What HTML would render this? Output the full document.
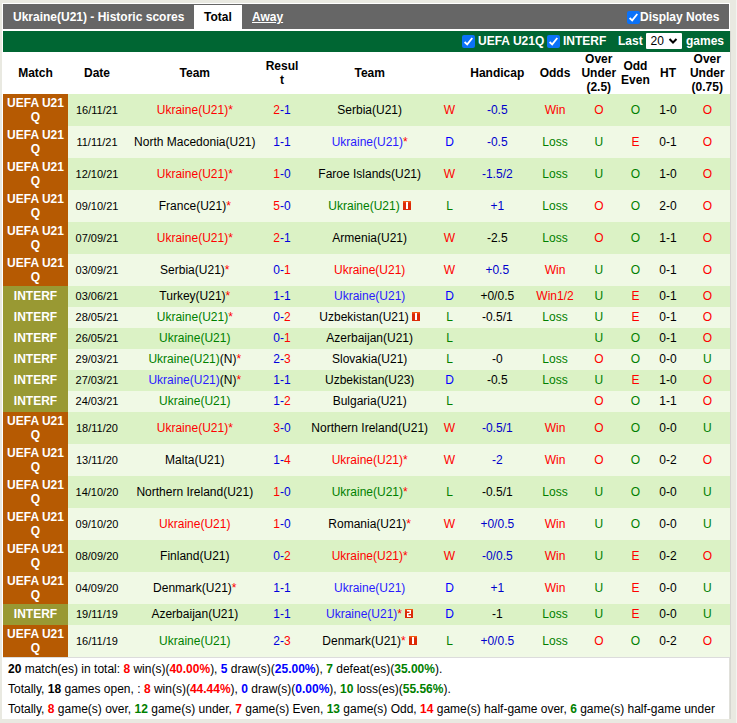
<!DOCTYPE html>
<html><head><meta charset="utf-8">
<style>
*{box-sizing:border-box}
html,body{margin:0;padding:0}
body{width:737px;height:723px;position:relative;overflow:hidden;background:#e9e9e1;font-family:"Liberation Sans",sans-serif;font-size:12px;color:#000}
.abs{position:absolute}
.row{position:absolute;left:68px;width:662px}
.lg{position:absolute;left:3px;width:65px;color:#fff;font-weight:bold;font-size:12px;text-align:center}
.c{position:absolute;text-align:center;white-space:nowrap}
.hc{position:absolute;top:52px;height:42px;display:flex;align-items:center;justify-content:center;text-align:center;font-weight:bold;line-height:14px;white-space:nowrap}
.rc{vertical-align:baseline}
.sum{position:absolute;left:8px;white-space:nowrap}
.cb{position:absolute;width:13px;height:13px;background:#0b72f8;border-radius:2px}
.cb svg{position:absolute;left:0;top:0}
</style></head><body>
<div class="abs" style="left:2px;top:3px;width:728px;height:716px;background:#fff"></div>
<div class="abs" style="left:730px;top:31px;width:1px;height:688px;background:#d6d6d0"></div>
<div class="abs" style="left:736px;top:0;width:1px;height:723px;background:#f4f4f0"></div>
<div class="abs" style="left:729px;top:658px;width:1px;height:61px;background:#e0e0da"></div>
<div class="abs" style="left:3px;top:4px;width:726px;height:25px;background:#666"></div>
<div class="abs" style="left:194px;top:5px;width:48px;height:26px;background:#fff"></div>
<div class="abs" style="left:13px;top:10px;color:#fff;font-weight:bold;line-height:14px">Ukraine(U21) - Historic scores</div>
<div class="abs" style="left:204px;top:10px;color:#000;font-weight:bold;line-height:14px">Total</div>
<div class="abs" style="left:252px;top:10px;color:#fff;font-weight:bold;line-height:14px;text-decoration:underline">Away</div>
<div class="cb" style="left:627px;top:11px"><svg width="13" height="13" viewBox="0 0 13 13"><path d="M2.6 7 L5.2 9.4 L10.3 3" stroke="#fff" stroke-width="1.8" fill="none"/></svg></div>
<div class="abs" style="left:640px;top:10px;color:#fff;font-weight:bold;line-height:14px">Display Notes</div>
<div class="abs" style="left:3px;top:31px;width:727px;height:21px;background:#006633"></div>
<div class="cb" style="left:462px;top:35px"><svg width="13" height="13" viewBox="0 0 13 13"><path d="M2.6 7 L5.2 9.4 L10.3 3" stroke="#fff" stroke-width="1.8" fill="none"/></svg></div>
<div class="abs" style="left:478px;top:34px;color:#fff;font-weight:bold;line-height:14px">UEFA U21Q</div>
<div class="cb" style="left:547px;top:35px"><svg width="13" height="13" viewBox="0 0 13 13"><path d="M2.6 7 L5.2 9.4 L10.3 3" stroke="#fff" stroke-width="1.8" fill="none"/></svg></div>
<div class="abs" style="left:563px;top:34px;color:#fff;font-weight:bold;line-height:14px">INTERF</div>
<div class="abs" style="left:618px;top:34px;color:#fff;font-weight:bold;line-height:14px">Last</div>
<div class="abs" style="left:646px;top:33px;width:36px;height:16px;background:#fff;border-radius:1px"></div>
<div class="abs" style="left:650.5px;top:34px;color:#000;font-size:12px;line-height:14px">20</div>
<svg class="abs" style="left:668px;top:37px" width="10" height="8" viewBox="0 0 10 8"><path d="M1.5 2 L5 5.5 L8.5 2" stroke="#000" stroke-width="2" fill="none"/></svg>
<div class="abs" style="left:686px;top:34px;color:#fff;font-weight:bold;line-height:14px">games</div>
<div class="hc" style="left:-64.5px;width:200px">Match</div>
<div class="hc" style="left:-3.0px;width:200px">Date</div>
<div class="hc" style="left:94.8px;width:200px">Team</div>
<div class="hc" style="left:182.0px;width:200px">Resul<br>t</div>
<div class="hc" style="left:269.7px;width:200px">Team</div>
<div class="hc" style="left:397.3px;width:200px">Handicap</div>
<div class="hc" style="left:455.0px;width:200px">Odds</div>
<div class="hc" style="left:498.8px;width:200px">Over<br>Under<br>(2.5)</div>
<div class="hc" style="left:535.4px;width:200px">Odd<br>Even</div>
<div class="hc" style="left:568.0px;width:200px">HT</div>
<div class="hc" style="left:607.3px;width:200px">Over<br>Under<br>(0.75)</div>
<div class="row" style="top:94px;height:32px;background:#dbf2c5"></div>
<div class="lg" style="top:94px;height:32px;background:#b65a02"><div style="padding-top:2px;line-height:14px">UEFA U21<br>Q</div></div>
<div class="c" style="left:-23.0px;top:94px;width:240px;height:32px;line-height:32px;font-size:11px">16/11/21</div>
<div class="c" style="left:74.8px;top:94px;width:240px;height:32px;line-height:32px;"><span style="color:#ff0000">Ukraine(U21)</span><span style="color:#ff0000">*</span></div>
<div class="c" style="left:162.0px;top:94px;width:240px;height:32px;line-height:32px;"><span style="color:#ff0000">2</span><span style="color:#0000dd">-1</span></div>
<div class="c" style="left:249.7px;top:94px;width:240px;height:32px;line-height:32px;">Serbia(U21)</div>
<div class="c" style="left:329.5px;top:94px;width:240px;height:32px;line-height:32px;"><span style="color:#ff0000">W</span></div>
<div class="c" style="left:377.3px;top:94px;width:240px;height:32px;line-height:32px;"><span style="color:#0000cc">-0.5</span></div>
<div class="c" style="left:435.0px;top:94px;width:240px;height:32px;line-height:32px;"><span style="color:#ff0000">Win</span></div>
<div class="c" style="left:478.8px;top:94px;width:240px;height:32px;line-height:32px;"><span style="color:#ff0000">O</span></div>
<div class="c" style="left:515.4px;top:94px;width:240px;height:32px;line-height:32px;"><span style="color:#008000">O</span></div>
<div class="c" style="left:548.0px;top:94px;width:240px;height:32px;line-height:32px;">1-0</div>
<div class="c" style="left:587.3px;top:94px;width:240px;height:32px;line-height:32px;"><span style="color:#ff0000">O</span></div>
<div class="row" style="top:126px;height:32px;background:#f0f9e5"></div>
<div class="lg" style="top:126px;height:32px;background:#b65a02"><div style="padding-top:2px;line-height:14px">UEFA U21<br>Q</div></div>
<div class="c" style="left:-23.0px;top:126px;width:240px;height:32px;line-height:32px;font-size:11px">11/11/21</div>
<div class="c" style="left:74.8px;top:126px;width:240px;height:32px;line-height:32px;">North Macedonia(U21)</div>
<div class="c" style="left:162.0px;top:126px;width:240px;height:32px;line-height:32px;"><span style="color:#0000dd">1-1</span></div>
<div class="c" style="left:249.7px;top:126px;width:240px;height:32px;line-height:32px;"><span style="color:#2a1aff">Ukraine(U21)</span><span style="color:#ff0000">*</span></div>
<div class="c" style="left:329.5px;top:126px;width:240px;height:32px;line-height:32px;"><span style="color:#0000ff">D</span></div>
<div class="c" style="left:377.3px;top:126px;width:240px;height:32px;line-height:32px;"><span style="color:#0000cc">-0.5</span></div>
<div class="c" style="left:435.0px;top:126px;width:240px;height:32px;line-height:32px;"><span style="color:#008000">Loss</span></div>
<div class="c" style="left:478.8px;top:126px;width:240px;height:32px;line-height:32px;"><span style="color:#008000">U</span></div>
<div class="c" style="left:515.4px;top:126px;width:240px;height:32px;line-height:32px;"><span style="color:#ff0000">E</span></div>
<div class="c" style="left:548.0px;top:126px;width:240px;height:32px;line-height:32px;">0-1</div>
<div class="c" style="left:587.3px;top:126px;width:240px;height:32px;line-height:32px;"><span style="color:#ff0000">O</span></div>
<div class="row" style="top:158px;height:32px;background:#dbf2c5"></div>
<div class="lg" style="top:158px;height:32px;background:#b65a02"><div style="padding-top:2px;line-height:14px">UEFA U21<br>Q</div></div>
<div class="c" style="left:-23.0px;top:158px;width:240px;height:32px;line-height:32px;font-size:11px">12/10/21</div>
<div class="c" style="left:74.8px;top:158px;width:240px;height:32px;line-height:32px;"><span style="color:#ff0000">Ukraine(U21)</span><span style="color:#ff0000">*</span></div>
<div class="c" style="left:162.0px;top:158px;width:240px;height:32px;line-height:32px;"><span style="color:#ff0000">1</span><span style="color:#0000dd">-0</span></div>
<div class="c" style="left:249.7px;top:158px;width:240px;height:32px;line-height:32px;">Faroe Islands(U21)</div>
<div class="c" style="left:329.5px;top:158px;width:240px;height:32px;line-height:32px;"><span style="color:#ff0000">W</span></div>
<div class="c" style="left:377.3px;top:158px;width:240px;height:32px;line-height:32px;"><span style="color:#0000cc">-1.5/2</span></div>
<div class="c" style="left:435.0px;top:158px;width:240px;height:32px;line-height:32px;"><span style="color:#008000">Loss</span></div>
<div class="c" style="left:478.8px;top:158px;width:240px;height:32px;line-height:32px;"><span style="color:#008000">U</span></div>
<div class="c" style="left:515.4px;top:158px;width:240px;height:32px;line-height:32px;"><span style="color:#008000">O</span></div>
<div class="c" style="left:548.0px;top:158px;width:240px;height:32px;line-height:32px;">1-0</div>
<div class="c" style="left:587.3px;top:158px;width:240px;height:32px;line-height:32px;"><span style="color:#ff0000">O</span></div>
<div class="row" style="top:190px;height:32px;background:#f0f9e5"></div>
<div class="lg" style="top:190px;height:32px;background:#b65a02"><div style="padding-top:2px;line-height:14px">UEFA U21<br>Q</div></div>
<div class="c" style="left:-23.0px;top:190px;width:240px;height:32px;line-height:32px;font-size:11px">09/10/21</div>
<div class="c" style="left:74.8px;top:190px;width:240px;height:32px;line-height:32px;">France(U21)<span style="color:#ff0000">*</span></div>
<div class="c" style="left:162.0px;top:190px;width:240px;height:32px;line-height:32px;"><span style="color:#ff0000">5</span><span style="color:#0000dd">-0</span></div>
<div class="c" style="left:249.7px;top:190px;width:240px;height:32px;line-height:32px;"><span style="color:#008000">Ukraine(U21)</span> <svg class="rc" width="8" height="9" viewBox="0 0 8 9"><rect width="8" height="9" fill="#dc2a08"/><rect width="8" height="1.5" fill="#f25a14"/><rect x="3" y="1" width="2" height="7" fill="#fff"/></svg></div>
<div class="c" style="left:329.5px;top:190px;width:240px;height:32px;line-height:32px;"><span style="color:#008000">L</span></div>
<div class="c" style="left:377.3px;top:190px;width:240px;height:32px;line-height:32px;"><span style="color:#0000cc">+1</span></div>
<div class="c" style="left:435.0px;top:190px;width:240px;height:32px;line-height:32px;"><span style="color:#008000">Loss</span></div>
<div class="c" style="left:478.8px;top:190px;width:240px;height:32px;line-height:32px;"><span style="color:#ff0000">O</span></div>
<div class="c" style="left:515.4px;top:190px;width:240px;height:32px;line-height:32px;"><span style="color:#008000">O</span></div>
<div class="c" style="left:548.0px;top:190px;width:240px;height:32px;line-height:32px;">2-0</div>
<div class="c" style="left:587.3px;top:190px;width:240px;height:32px;line-height:32px;"><span style="color:#ff0000">O</span></div>
<div class="row" style="top:222px;height:32px;background:#dbf2c5"></div>
<div class="lg" style="top:222px;height:32px;background:#b65a02"><div style="padding-top:2px;line-height:14px">UEFA U21<br>Q</div></div>
<div class="c" style="left:-23.0px;top:222px;width:240px;height:32px;line-height:32px;font-size:11px">07/09/21</div>
<div class="c" style="left:74.8px;top:222px;width:240px;height:32px;line-height:32px;"><span style="color:#ff0000">Ukraine(U21)</span><span style="color:#ff0000">*</span></div>
<div class="c" style="left:162.0px;top:222px;width:240px;height:32px;line-height:32px;"><span style="color:#ff0000">2</span><span style="color:#0000dd">-1</span></div>
<div class="c" style="left:249.7px;top:222px;width:240px;height:32px;line-height:32px;">Armenia(U21)</div>
<div class="c" style="left:329.5px;top:222px;width:240px;height:32px;line-height:32px;"><span style="color:#ff0000">W</span></div>
<div class="c" style="left:377.3px;top:222px;width:240px;height:32px;line-height:32px;"><span style="color:#000000">-2.5</span></div>
<div class="c" style="left:435.0px;top:222px;width:240px;height:32px;line-height:32px;"><span style="color:#008000">Loss</span></div>
<div class="c" style="left:478.8px;top:222px;width:240px;height:32px;line-height:32px;"><span style="color:#ff0000">O</span></div>
<div class="c" style="left:515.4px;top:222px;width:240px;height:32px;line-height:32px;"><span style="color:#008000">O</span></div>
<div class="c" style="left:548.0px;top:222px;width:240px;height:32px;line-height:32px;">1-1</div>
<div class="c" style="left:587.3px;top:222px;width:240px;height:32px;line-height:32px;"><span style="color:#ff0000">O</span></div>
<div class="row" style="top:254px;height:32px;background:#f0f9e5"></div>
<div class="lg" style="top:254px;height:32px;background:#b65a02"><div style="padding-top:2px;line-height:14px">UEFA U21<br>Q</div></div>
<div class="c" style="left:-23.0px;top:254px;width:240px;height:32px;line-height:32px;font-size:11px">03/09/21</div>
<div class="c" style="left:74.8px;top:254px;width:240px;height:32px;line-height:32px;">Serbia(U21)<span style="color:#ff0000">*</span></div>
<div class="c" style="left:162.0px;top:254px;width:240px;height:32px;line-height:32px;"><span style="color:#0000dd">0-</span><span style="color:#ff0000">1</span></div>
<div class="c" style="left:249.7px;top:254px;width:240px;height:32px;line-height:32px;"><span style="color:#ff0000">Ukraine(U21)</span></div>
<div class="c" style="left:329.5px;top:254px;width:240px;height:32px;line-height:32px;"><span style="color:#ff0000">W</span></div>
<div class="c" style="left:377.3px;top:254px;width:240px;height:32px;line-height:32px;"><span style="color:#0000cc">+0.5</span></div>
<div class="c" style="left:435.0px;top:254px;width:240px;height:32px;line-height:32px;"><span style="color:#ff0000">Win</span></div>
<div class="c" style="left:478.8px;top:254px;width:240px;height:32px;line-height:32px;"><span style="color:#008000">U</span></div>
<div class="c" style="left:515.4px;top:254px;width:240px;height:32px;line-height:32px;"><span style="color:#008000">O</span></div>
<div class="c" style="left:548.0px;top:254px;width:240px;height:32px;line-height:32px;">0-1</div>
<div class="c" style="left:587.3px;top:254px;width:240px;height:32px;line-height:32px;"><span style="color:#ff0000">O</span></div>
<div class="row" style="top:286px;height:21px;background:#dbf2c5"></div>
<div class="lg" style="top:286px;height:21px;line-height:21px;background:#999933">INTERF</div>
<div class="c" style="left:-23.0px;top:286px;width:240px;height:21px;line-height:21px;font-size:11px">03/06/21</div>
<div class="c" style="left:74.8px;top:286px;width:240px;height:21px;line-height:21px;">Turkey(U21)<span style="color:#ff0000">*</span></div>
<div class="c" style="left:162.0px;top:286px;width:240px;height:21px;line-height:21px;"><span style="color:#0000dd">1-1</span></div>
<div class="c" style="left:249.7px;top:286px;width:240px;height:21px;line-height:21px;"><span style="color:#2a1aff">Ukraine(U21)</span></div>
<div class="c" style="left:329.5px;top:286px;width:240px;height:21px;line-height:21px;"><span style="color:#0000ff">D</span></div>
<div class="c" style="left:377.3px;top:286px;width:240px;height:21px;line-height:21px;"><span style="color:#000000">+0/0.5</span></div>
<div class="c" style="left:435.0px;top:286px;width:240px;height:21px;line-height:21px;"><span style="color:#ff0000">Win1/2</span></div>
<div class="c" style="left:478.8px;top:286px;width:240px;height:21px;line-height:21px;"><span style="color:#008000">U</span></div>
<div class="c" style="left:515.4px;top:286px;width:240px;height:21px;line-height:21px;"><span style="color:#ff0000">E</span></div>
<div class="c" style="left:548.0px;top:286px;width:240px;height:21px;line-height:21px;">0-1</div>
<div class="c" style="left:587.3px;top:286px;width:240px;height:21px;line-height:21px;"><span style="color:#ff0000">O</span></div>
<div class="row" style="top:307px;height:21px;background:#f0f9e5"></div>
<div class="lg" style="top:307px;height:21px;line-height:21px;background:#999933">INTERF</div>
<div class="c" style="left:-23.0px;top:307px;width:240px;height:21px;line-height:21px;font-size:11px">28/05/21</div>
<div class="c" style="left:74.8px;top:307px;width:240px;height:21px;line-height:21px;"><span style="color:#008000">Ukraine(U21)</span><span style="color:#ff0000">*</span></div>
<div class="c" style="left:162.0px;top:307px;width:240px;height:21px;line-height:21px;"><span style="color:#0000dd">0-</span><span style="color:#ff0000">2</span></div>
<div class="c" style="left:249.7px;top:307px;width:240px;height:21px;line-height:21px;">Uzbekistan(U21) <svg class="rc" width="8" height="9" viewBox="0 0 8 9"><rect width="8" height="9" fill="#dc2a08"/><rect width="8" height="1.5" fill="#f25a14"/><rect x="3" y="1" width="2" height="7" fill="#fff"/></svg></div>
<div class="c" style="left:329.5px;top:307px;width:240px;height:21px;line-height:21px;"><span style="color:#008000">L</span></div>
<div class="c" style="left:377.3px;top:307px;width:240px;height:21px;line-height:21px;"><span style="color:#000000">-0.5/1</span></div>
<div class="c" style="left:435.0px;top:307px;width:240px;height:21px;line-height:21px;"><span style="color:#008000">Loss</span></div>
<div class="c" style="left:478.8px;top:307px;width:240px;height:21px;line-height:21px;"><span style="color:#008000">U</span></div>
<div class="c" style="left:515.4px;top:307px;width:240px;height:21px;line-height:21px;"><span style="color:#ff0000">E</span></div>
<div class="c" style="left:548.0px;top:307px;width:240px;height:21px;line-height:21px;">0-1</div>
<div class="c" style="left:587.3px;top:307px;width:240px;height:21px;line-height:21px;"><span style="color:#ff0000">O</span></div>
<div class="row" style="top:328px;height:21px;background:#dbf2c5"></div>
<div class="lg" style="top:328px;height:21px;line-height:21px;background:#999933">INTERF</div>
<div class="c" style="left:-23.0px;top:328px;width:240px;height:21px;line-height:21px;font-size:11px">26/05/21</div>
<div class="c" style="left:74.8px;top:328px;width:240px;height:21px;line-height:21px;"><span style="color:#008000">Ukraine(U21)</span></div>
<div class="c" style="left:162.0px;top:328px;width:240px;height:21px;line-height:21px;"><span style="color:#0000dd">0-</span><span style="color:#ff0000">1</span></div>
<div class="c" style="left:249.7px;top:328px;width:240px;height:21px;line-height:21px;">Azerbaijan(U21)</div>
<div class="c" style="left:329.5px;top:328px;width:240px;height:21px;line-height:21px;"><span style="color:#008000">L</span></div>
<div class="c" style="left:377.3px;top:328px;width:240px;height:21px;line-height:21px;"><span style="color:#000000"></span></div>
<div class="c" style="left:435.0px;top:328px;width:240px;height:21px;line-height:21px;"><span style="color:#000000"></span></div>
<div class="c" style="left:478.8px;top:328px;width:240px;height:21px;line-height:21px;"><span style="color:#008000">U</span></div>
<div class="c" style="left:515.4px;top:328px;width:240px;height:21px;line-height:21px;"><span style="color:#008000">O</span></div>
<div class="c" style="left:548.0px;top:328px;width:240px;height:21px;line-height:21px;">0-1</div>
<div class="c" style="left:587.3px;top:328px;width:240px;height:21px;line-height:21px;"><span style="color:#ff0000">O</span></div>
<div class="row" style="top:349px;height:21px;background:#f0f9e5"></div>
<div class="lg" style="top:349px;height:21px;line-height:21px;background:#999933">INTERF</div>
<div class="c" style="left:-23.0px;top:349px;width:240px;height:21px;line-height:21px;font-size:11px">29/03/21</div>
<div class="c" style="left:74.8px;top:349px;width:240px;height:21px;line-height:21px;"><span style="color:#008000">Ukraine(U21)</span>(N)<span style="color:#ff0000">*</span></div>
<div class="c" style="left:162.0px;top:349px;width:240px;height:21px;line-height:21px;"><span style="color:#0000dd">2-</span><span style="color:#ff0000">3</span></div>
<div class="c" style="left:249.7px;top:349px;width:240px;height:21px;line-height:21px;">Slovakia(U21)</div>
<div class="c" style="left:329.5px;top:349px;width:240px;height:21px;line-height:21px;"><span style="color:#008000">L</span></div>
<div class="c" style="left:377.3px;top:349px;width:240px;height:21px;line-height:21px;"><span style="color:#000000">-0</span></div>
<div class="c" style="left:435.0px;top:349px;width:240px;height:21px;line-height:21px;"><span style="color:#008000">Loss</span></div>
<div class="c" style="left:478.8px;top:349px;width:240px;height:21px;line-height:21px;"><span style="color:#ff0000">O</span></div>
<div class="c" style="left:515.4px;top:349px;width:240px;height:21px;line-height:21px;"><span style="color:#008000">O</span></div>
<div class="c" style="left:548.0px;top:349px;width:240px;height:21px;line-height:21px;">0-0</div>
<div class="c" style="left:587.3px;top:349px;width:240px;height:21px;line-height:21px;"><span style="color:#008000">U</span></div>
<div class="row" style="top:370px;height:21px;background:#dbf2c5"></div>
<div class="lg" style="top:370px;height:21px;line-height:21px;background:#999933">INTERF</div>
<div class="c" style="left:-23.0px;top:370px;width:240px;height:21px;line-height:21px;font-size:11px">27/03/21</div>
<div class="c" style="left:74.8px;top:370px;width:240px;height:21px;line-height:21px;"><span style="color:#2a1aff">Ukraine(U21)</span>(N)<span style="color:#ff0000">*</span></div>
<div class="c" style="left:162.0px;top:370px;width:240px;height:21px;line-height:21px;"><span style="color:#0000dd">1-1</span></div>
<div class="c" style="left:249.7px;top:370px;width:240px;height:21px;line-height:21px;">Uzbekistan(U23)</div>
<div class="c" style="left:329.5px;top:370px;width:240px;height:21px;line-height:21px;"><span style="color:#0000ff">D</span></div>
<div class="c" style="left:377.3px;top:370px;width:240px;height:21px;line-height:21px;"><span style="color:#000000">-0.5</span></div>
<div class="c" style="left:435.0px;top:370px;width:240px;height:21px;line-height:21px;"><span style="color:#008000">Loss</span></div>
<div class="c" style="left:478.8px;top:370px;width:240px;height:21px;line-height:21px;"><span style="color:#008000">U</span></div>
<div class="c" style="left:515.4px;top:370px;width:240px;height:21px;line-height:21px;"><span style="color:#ff0000">E</span></div>
<div class="c" style="left:548.0px;top:370px;width:240px;height:21px;line-height:21px;">1-0</div>
<div class="c" style="left:587.3px;top:370px;width:240px;height:21px;line-height:21px;"><span style="color:#ff0000">O</span></div>
<div class="row" style="top:391px;height:21px;background:#f0f9e5"></div>
<div class="lg" style="top:391px;height:21px;line-height:21px;background:#999933">INTERF</div>
<div class="c" style="left:-23.0px;top:391px;width:240px;height:21px;line-height:21px;font-size:11px">24/03/21</div>
<div class="c" style="left:74.8px;top:391px;width:240px;height:21px;line-height:21px;"><span style="color:#008000">Ukraine(U21)</span></div>
<div class="c" style="left:162.0px;top:391px;width:240px;height:21px;line-height:21px;"><span style="color:#0000dd">1-</span><span style="color:#ff0000">2</span></div>
<div class="c" style="left:249.7px;top:391px;width:240px;height:21px;line-height:21px;">Bulgaria(U21)</div>
<div class="c" style="left:329.5px;top:391px;width:240px;height:21px;line-height:21px;"><span style="color:#008000">L</span></div>
<div class="c" style="left:377.3px;top:391px;width:240px;height:21px;line-height:21px;"><span style="color:#000000"></span></div>
<div class="c" style="left:435.0px;top:391px;width:240px;height:21px;line-height:21px;"><span style="color:#000000"></span></div>
<div class="c" style="left:478.8px;top:391px;width:240px;height:21px;line-height:21px;"><span style="color:#ff0000">O</span></div>
<div class="c" style="left:515.4px;top:391px;width:240px;height:21px;line-height:21px;"><span style="color:#008000">O</span></div>
<div class="c" style="left:548.0px;top:391px;width:240px;height:21px;line-height:21px;">1-1</div>
<div class="c" style="left:587.3px;top:391px;width:240px;height:21px;line-height:21px;"><span style="color:#ff0000">O</span></div>
<div class="row" style="top:412px;height:32px;background:#dbf2c5"></div>
<div class="lg" style="top:412px;height:32px;background:#b65a02"><div style="padding-top:2px;line-height:14px">UEFA U21<br>Q</div></div>
<div class="c" style="left:-23.0px;top:412px;width:240px;height:32px;line-height:32px;font-size:11px">18/11/20</div>
<div class="c" style="left:74.8px;top:412px;width:240px;height:32px;line-height:32px;"><span style="color:#ff0000">Ukraine(U21)</span><span style="color:#ff0000">*</span></div>
<div class="c" style="left:162.0px;top:412px;width:240px;height:32px;line-height:32px;"><span style="color:#ff0000">3</span><span style="color:#0000dd">-0</span></div>
<div class="c" style="left:249.7px;top:412px;width:240px;height:32px;line-height:32px;">Northern Ireland(U21)</div>
<div class="c" style="left:329.5px;top:412px;width:240px;height:32px;line-height:32px;"><span style="color:#ff0000">W</span></div>
<div class="c" style="left:377.3px;top:412px;width:240px;height:32px;line-height:32px;"><span style="color:#0000cc">-0.5/1</span></div>
<div class="c" style="left:435.0px;top:412px;width:240px;height:32px;line-height:32px;"><span style="color:#ff0000">Win</span></div>
<div class="c" style="left:478.8px;top:412px;width:240px;height:32px;line-height:32px;"><span style="color:#ff0000">O</span></div>
<div class="c" style="left:515.4px;top:412px;width:240px;height:32px;line-height:32px;"><span style="color:#008000">O</span></div>
<div class="c" style="left:548.0px;top:412px;width:240px;height:32px;line-height:32px;">0-0</div>
<div class="c" style="left:587.3px;top:412px;width:240px;height:32px;line-height:32px;"><span style="color:#008000">U</span></div>
<div class="row" style="top:444px;height:32px;background:#f0f9e5"></div>
<div class="lg" style="top:444px;height:32px;background:#b65a02"><div style="padding-top:2px;line-height:14px">UEFA U21<br>Q</div></div>
<div class="c" style="left:-23.0px;top:444px;width:240px;height:32px;line-height:32px;font-size:11px">13/11/20</div>
<div class="c" style="left:74.8px;top:444px;width:240px;height:32px;line-height:32px;">Malta(U21)</div>
<div class="c" style="left:162.0px;top:444px;width:240px;height:32px;line-height:32px;"><span style="color:#0000dd">1-</span><span style="color:#ff0000">4</span></div>
<div class="c" style="left:249.7px;top:444px;width:240px;height:32px;line-height:32px;"><span style="color:#ff0000">Ukraine(U21)</span><span style="color:#ff0000">*</span></div>
<div class="c" style="left:329.5px;top:444px;width:240px;height:32px;line-height:32px;"><span style="color:#ff0000">W</span></div>
<div class="c" style="left:377.3px;top:444px;width:240px;height:32px;line-height:32px;"><span style="color:#0000cc">-2</span></div>
<div class="c" style="left:435.0px;top:444px;width:240px;height:32px;line-height:32px;"><span style="color:#ff0000">Win</span></div>
<div class="c" style="left:478.8px;top:444px;width:240px;height:32px;line-height:32px;"><span style="color:#ff0000">O</span></div>
<div class="c" style="left:515.4px;top:444px;width:240px;height:32px;line-height:32px;"><span style="color:#008000">O</span></div>
<div class="c" style="left:548.0px;top:444px;width:240px;height:32px;line-height:32px;">0-2</div>
<div class="c" style="left:587.3px;top:444px;width:240px;height:32px;line-height:32px;"><span style="color:#ff0000">O</span></div>
<div class="row" style="top:476px;height:32px;background:#dbf2c5"></div>
<div class="lg" style="top:476px;height:32px;background:#b65a02"><div style="padding-top:2px;line-height:14px">UEFA U21<br>Q</div></div>
<div class="c" style="left:-23.0px;top:476px;width:240px;height:32px;line-height:32px;font-size:11px">14/10/20</div>
<div class="c" style="left:74.8px;top:476px;width:240px;height:32px;line-height:32px;">Northern Ireland(U21)</div>
<div class="c" style="left:162.0px;top:476px;width:240px;height:32px;line-height:32px;"><span style="color:#ff0000">1</span><span style="color:#0000dd">-0</span></div>
<div class="c" style="left:249.7px;top:476px;width:240px;height:32px;line-height:32px;"><span style="color:#008000">Ukraine(U21)</span><span style="color:#ff0000">*</span></div>
<div class="c" style="left:329.5px;top:476px;width:240px;height:32px;line-height:32px;"><span style="color:#008000">L</span></div>
<div class="c" style="left:377.3px;top:476px;width:240px;height:32px;line-height:32px;"><span style="color:#000000">-0.5/1</span></div>
<div class="c" style="left:435.0px;top:476px;width:240px;height:32px;line-height:32px;"><span style="color:#008000">Loss</span></div>
<div class="c" style="left:478.8px;top:476px;width:240px;height:32px;line-height:32px;"><span style="color:#008000">U</span></div>
<div class="c" style="left:515.4px;top:476px;width:240px;height:32px;line-height:32px;"><span style="color:#008000">O</span></div>
<div class="c" style="left:548.0px;top:476px;width:240px;height:32px;line-height:32px;">0-0</div>
<div class="c" style="left:587.3px;top:476px;width:240px;height:32px;line-height:32px;"><span style="color:#008000">U</span></div>
<div class="row" style="top:508px;height:32px;background:#f0f9e5"></div>
<div class="lg" style="top:508px;height:32px;background:#b65a02"><div style="padding-top:2px;line-height:14px">UEFA U21<br>Q</div></div>
<div class="c" style="left:-23.0px;top:508px;width:240px;height:32px;line-height:32px;font-size:11px">09/10/20</div>
<div class="c" style="left:74.8px;top:508px;width:240px;height:32px;line-height:32px;"><span style="color:#ff0000">Ukraine(U21)</span></div>
<div class="c" style="left:162.0px;top:508px;width:240px;height:32px;line-height:32px;"><span style="color:#ff0000">1</span><span style="color:#0000dd">-0</span></div>
<div class="c" style="left:249.7px;top:508px;width:240px;height:32px;line-height:32px;">Romania(U21)<span style="color:#ff0000">*</span></div>
<div class="c" style="left:329.5px;top:508px;width:240px;height:32px;line-height:32px;"><span style="color:#ff0000">W</span></div>
<div class="c" style="left:377.3px;top:508px;width:240px;height:32px;line-height:32px;"><span style="color:#0000cc">+0/0.5</span></div>
<div class="c" style="left:435.0px;top:508px;width:240px;height:32px;line-height:32px;"><span style="color:#ff0000">Win</span></div>
<div class="c" style="left:478.8px;top:508px;width:240px;height:32px;line-height:32px;"><span style="color:#008000">U</span></div>
<div class="c" style="left:515.4px;top:508px;width:240px;height:32px;line-height:32px;"><span style="color:#008000">O</span></div>
<div class="c" style="left:548.0px;top:508px;width:240px;height:32px;line-height:32px;">0-0</div>
<div class="c" style="left:587.3px;top:508px;width:240px;height:32px;line-height:32px;"><span style="color:#008000">U</span></div>
<div class="row" style="top:540px;height:32px;background:#dbf2c5"></div>
<div class="lg" style="top:540px;height:32px;background:#b65a02"><div style="padding-top:2px;line-height:14px">UEFA U21<br>Q</div></div>
<div class="c" style="left:-23.0px;top:540px;width:240px;height:32px;line-height:32px;font-size:11px">08/09/20</div>
<div class="c" style="left:74.8px;top:540px;width:240px;height:32px;line-height:32px;">Finland(U21)</div>
<div class="c" style="left:162.0px;top:540px;width:240px;height:32px;line-height:32px;"><span style="color:#0000dd">0-</span><span style="color:#ff0000">2</span></div>
<div class="c" style="left:249.7px;top:540px;width:240px;height:32px;line-height:32px;"><span style="color:#ff0000">Ukraine(U21)</span><span style="color:#ff0000">*</span></div>
<div class="c" style="left:329.5px;top:540px;width:240px;height:32px;line-height:32px;"><span style="color:#ff0000">W</span></div>
<div class="c" style="left:377.3px;top:540px;width:240px;height:32px;line-height:32px;"><span style="color:#0000cc">-0/0.5</span></div>
<div class="c" style="left:435.0px;top:540px;width:240px;height:32px;line-height:32px;"><span style="color:#ff0000">Win</span></div>
<div class="c" style="left:478.8px;top:540px;width:240px;height:32px;line-height:32px;"><span style="color:#008000">U</span></div>
<div class="c" style="left:515.4px;top:540px;width:240px;height:32px;line-height:32px;"><span style="color:#ff0000">E</span></div>
<div class="c" style="left:548.0px;top:540px;width:240px;height:32px;line-height:32px;">0-2</div>
<div class="c" style="left:587.3px;top:540px;width:240px;height:32px;line-height:32px;"><span style="color:#ff0000">O</span></div>
<div class="row" style="top:572px;height:32px;background:#f0f9e5"></div>
<div class="lg" style="top:572px;height:32px;background:#b65a02"><div style="padding-top:2px;line-height:14px">UEFA U21<br>Q</div></div>
<div class="c" style="left:-23.0px;top:572px;width:240px;height:32px;line-height:32px;font-size:11px">04/09/20</div>
<div class="c" style="left:74.8px;top:572px;width:240px;height:32px;line-height:32px;">Denmark(U21)<span style="color:#ff0000">*</span></div>
<div class="c" style="left:162.0px;top:572px;width:240px;height:32px;line-height:32px;"><span style="color:#0000dd">1-1</span></div>
<div class="c" style="left:249.7px;top:572px;width:240px;height:32px;line-height:32px;"><span style="color:#2a1aff">Ukraine(U21)</span></div>
<div class="c" style="left:329.5px;top:572px;width:240px;height:32px;line-height:32px;"><span style="color:#0000ff">D</span></div>
<div class="c" style="left:377.3px;top:572px;width:240px;height:32px;line-height:32px;"><span style="color:#0000cc">+1</span></div>
<div class="c" style="left:435.0px;top:572px;width:240px;height:32px;line-height:32px;"><span style="color:#ff0000">Win</span></div>
<div class="c" style="left:478.8px;top:572px;width:240px;height:32px;line-height:32px;"><span style="color:#008000">U</span></div>
<div class="c" style="left:515.4px;top:572px;width:240px;height:32px;line-height:32px;"><span style="color:#ff0000">E</span></div>
<div class="c" style="left:548.0px;top:572px;width:240px;height:32px;line-height:32px;">0-0</div>
<div class="c" style="left:587.3px;top:572px;width:240px;height:32px;line-height:32px;"><span style="color:#008000">U</span></div>
<div class="row" style="top:604px;height:21px;background:#dbf2c5"></div>
<div class="lg" style="top:604px;height:21px;line-height:21px;background:#999933">INTERF</div>
<div class="c" style="left:-23.0px;top:604px;width:240px;height:21px;line-height:21px;font-size:11px">19/11/19</div>
<div class="c" style="left:74.8px;top:604px;width:240px;height:21px;line-height:21px;">Azerbaijan(U21)</div>
<div class="c" style="left:162.0px;top:604px;width:240px;height:21px;line-height:21px;"><span style="color:#0000dd">1-1</span></div>
<div class="c" style="left:249.7px;top:604px;width:240px;height:21px;line-height:21px;"><span style="color:#2a1aff">Ukraine(U21)</span><span style="color:#ff0000">*</span> <svg class="rc" width="8" height="9" viewBox="0 0 8 9"><rect width="8" height="9" fill="#dc2a08"/><rect width="8" height="1.5" fill="#f25a14"/><path d="M2 1H6V5H3.5V6.5H6V8H2V4H4.5V2.5H2Z" fill="#fff"/></svg></div>
<div class="c" style="left:329.5px;top:604px;width:240px;height:21px;line-height:21px;"><span style="color:#0000ff">D</span></div>
<div class="c" style="left:377.3px;top:604px;width:240px;height:21px;line-height:21px;"><span style="color:#000000">-1</span></div>
<div class="c" style="left:435.0px;top:604px;width:240px;height:21px;line-height:21px;"><span style="color:#008000">Loss</span></div>
<div class="c" style="left:478.8px;top:604px;width:240px;height:21px;line-height:21px;"><span style="color:#008000">U</span></div>
<div class="c" style="left:515.4px;top:604px;width:240px;height:21px;line-height:21px;"><span style="color:#ff0000">E</span></div>
<div class="c" style="left:548.0px;top:604px;width:240px;height:21px;line-height:21px;">0-0</div>
<div class="c" style="left:587.3px;top:604px;width:240px;height:21px;line-height:21px;"><span style="color:#008000">U</span></div>
<div class="row" style="top:625px;height:32px;background:#f0f9e5"></div>
<div class="lg" style="top:625px;height:32px;background:#b65a02"><div style="padding-top:2px;line-height:14px">UEFA U21<br>Q</div></div>
<div class="c" style="left:-23.0px;top:625px;width:240px;height:32px;line-height:32px;font-size:11px">16/11/19</div>
<div class="c" style="left:74.8px;top:625px;width:240px;height:32px;line-height:32px;"><span style="color:#008000">Ukraine(U21)</span></div>
<div class="c" style="left:162.0px;top:625px;width:240px;height:32px;line-height:32px;"><span style="color:#0000dd">2-</span><span style="color:#ff0000">3</span></div>
<div class="c" style="left:249.7px;top:625px;width:240px;height:32px;line-height:32px;">Denmark(U21)<span style="color:#ff0000">*</span> <svg class="rc" width="8" height="9" viewBox="0 0 8 9"><rect width="8" height="9" fill="#dc2a08"/><rect width="8" height="1.5" fill="#f25a14"/><rect x="3" y="1" width="2" height="7" fill="#fff"/></svg></div>
<div class="c" style="left:329.5px;top:625px;width:240px;height:32px;line-height:32px;"><span style="color:#008000">L</span></div>
<div class="c" style="left:377.3px;top:625px;width:240px;height:32px;line-height:32px;"><span style="color:#0000cc">+0/0.5</span></div>
<div class="c" style="left:435.0px;top:625px;width:240px;height:32px;line-height:32px;"><span style="color:#008000">Loss</span></div>
<div class="c" style="left:478.8px;top:625px;width:240px;height:32px;line-height:32px;"><span style="color:#ff0000">O</span></div>
<div class="c" style="left:515.4px;top:625px;width:240px;height:32px;line-height:32px;"><span style="color:#008000">O</span></div>
<div class="c" style="left:548.0px;top:625px;width:240px;height:32px;line-height:32px;">0-2</div>
<div class="c" style="left:587.3px;top:625px;width:240px;height:32px;line-height:32px;"><span style="color:#ff0000">O</span></div>
<div class="abs" style="left:3px;top:657px;width:727px;height:1px;background:#dcdcdc"></div>
<div class="sum" style="top:662px"><b>20</b> match(es) in total: <b style="color:#ff0000">8</b> win(s)(<b style="color:#ff0000">40.00%</b>), <b style="color:#0000ff">5</b> draw(s)(<b style="color:#0000ff">25.00%</b>), <b style="color:#008000">7</b> defeat(es)(<b style="color:#008000">35.00%</b>).</div>
<div class="sum" style="top:682px">Totally, <b>18</b> games open, : <b style="color:#ff0000">8</b> win(s)(<b style="color:#ff0000">44.44%</b>), <b style="color:#0000ff">0</b> draw(s)(<b style="color:#0000ff">0.00%</b>), <b style="color:#008000">10</b> loss(es)(<b style="color:#008000">55.56%</b>).</div>
<div class="sum" style="top:702px">Totally, <b style="color:#ff0000">8</b> game(s) over, <b style="color:#008000">12</b> game(s) under, <b style="color:#ff0000">7</b> game(s) Even, <b style="color:#008000">13</b> game(s) Odd, <b style="color:#ff0000">14</b> game(s) half-game over, <b style="color:#008000">6</b> game(s) half-game under</div>
</body></html>
